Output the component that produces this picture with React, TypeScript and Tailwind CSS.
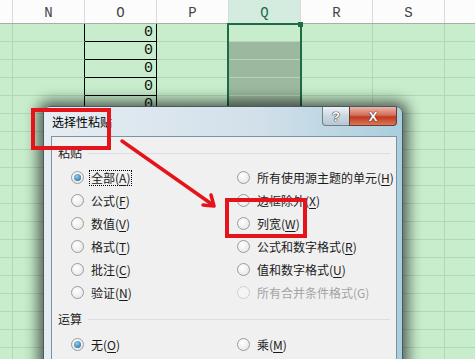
import React from "react";

const colW = ["w-[13px]", "w-[72px]", "w-[72px]", "w-[72px]", "w-[72px]", "w-[72px]", "w-[72px]", "w-[40px]"];
const heads = ["", "N", "O", "P", "Q", "R", "S", ""];
const rows = Array.from({ length: 20 }, (_, i) => i);

function Radio({ checked = false, disabled = false }: { checked?: boolean; disabled?: boolean }) {
  return (
    <span
      className={
        "relative flex h-[13px] w-[13px] shrink-0 items-center justify-center rounded-full border " +
        (disabled
          ? "border-[#cfcfcf] bg-[#f4f4f4]"
          : "border-[#9a9b9b] bg-[radial-gradient(circle_at_40%_35%,#ffffff,#e2e2e2)]")
      }
    >
      {checked && (
        <span className="h-[7px] w-[7px] rounded-full bg-[radial-gradient(circle_at_40%_35%,#8fd0f2,#1c5f8e)]" />
      )}
    </span>
  );
}

function Opt({
  label,
  k,
  checked,
  disabled,
  focus,
}: {
  label: string;
  k: string;
  checked?: boolean;
  disabled?: boolean;
  focus?: boolean;
}) {
  return (
    <div className="flex h-[23px] items-center gap-[5px]">
      <Radio checked={checked} disabled={disabled} />
      <span
        className={
          "px-[1px] leading-[14px] " +
          (focus ? "border border-dotted border-black " : "border border-transparent ") +
          (disabled ? "text-[#a3a3a3]" : "text-[#1a1a1a]")
        }
      >
        {label}(<span className={disabled ? "" : "underline underline-offset-2"}>{k}</span>)
      </span>
    </div>
  );
}

export default function App() {
  return (
    <div className="relative h-[359px] w-[475px] overflow-hidden bg-[#c7edcc] [font-family:'Noto_Sans_CJK_SC','Noto_Sans',sans-serif]">
      {/* header */}
      <div className="flex h-[24px] border-b border-[#a6aea8] bg-[#fbfcfb]">
        {heads.map((h, i) => (
          <div
            key={i}
            className={
              colW[i] +
              " flex shrink-0 items-center justify-center border-r border-[#d8dcd9] pt-[3px] text-[14px] [font-family:'Liberation_Mono',monospace] " +
              (i === 4 ? "bg-[#d3ecdf] text-[#1f6b45]" : "text-[#444]")
            }
          >
            {h}
          </div>
        ))}
      </div>
      {/* rows */}
      {rows.map((r) => (
        <div key={r} className="flex h-[18px]">
          {colW.map((w, i) => (
            <div
              key={i}
              className={
                w +
                " flex shrink-0 items-center justify-end border-b border-r pr-[3px] text-[15px] leading-none text-[#111] [font-family:'Liberation_Mono',monospace] " +
                (i === 1
                  ? "border-b-[#b2d6b7] border-r-black"
                  : i === 2
                  ? "border-black"
                  : "border-[#b2d6b7]") +
                (i === 4 && r >= 1 ? " bg-[#9cb89f]" : "")
              }
            >
              {i === 2 && r < 8 ? "0" : ""}
            </div>
          ))}
        </div>
      ))}

      {/* selection */}
      <div className="absolute left-[227px] top-[23px] h-[400px] w-[75px] border-2 border-[#1f6b45]" />
      <div className="absolute left-[298px] top-[22px] h-[5px] w-[5px] bg-[#1f6b45]" />

      {/* dialog */}
      <div className="absolute left-[43px] top-[106px] h-[270px] w-[360px] rounded-t-[7px] border border-[#4a5866] bg-[linear-gradient(to_right,#e6edf2,#d2e0ea_60%,#a9cedd)] shadow-[0_0_14px_5px_rgba(0,0,0,0.6)]">
        <div className="flex h-[29px] items-start justify-between pl-[8px] pr-[5px]">
          <div className="pt-[7px] text-[12px] leading-[16px] text-black">选择性粘贴</div>
          <div className="flex">
            <div className="flex h-[19px] w-[27px] items-center justify-center rounded-bl-[4px] border border-r-0 border-t-0 border-[#6d7f8d] bg-[linear-gradient(to_bottom,#eef3f6,#cbd8e1_50%,#b7c8d3)] text-[13px] font-bold leading-none text-white [text-shadow:0_0_1px_#333,0_0_1px_#333,0_0_1px_#333] [font-family:'Liberation_Sans',sans-serif]">
              ?
            </div>
            <div className="flex h-[19px] w-[48px] items-center justify-center rounded-br-[4px] border border-t-0 border-[#6b3a33] bg-[linear-gradient(to_bottom,#eab5a8,#d2705c_45%,#c0381f_55%,#d9775a)] text-[13px] font-bold leading-none text-white [text-shadow:0_0_1px_#402020,0_0_1px_#402020] [font-family:'Liberation_Sans',sans-serif]">
              X
            </div>
          </div>
        </div>
        <div className="ml-[7px] mr-[5px] h-[240px] border border-[#7f909e] bg-[#f0f0f0] pl-[6px] pt-[8px] text-[12px]">
          <div className="flex h-[16px] items-center gap-[6px] pr-[6px]">
            <span className="leading-[16px] text-[#1a1a1a]">粘贴</span>
            <div className="h-px flex-1 bg-[#d5dfe5]" />
          </div>
          <div className="mt-[5px] grid grid-cols-[166px_1fr] pl-[13px]">
            <div>
              <Opt label="全部" k="A" checked focus />
              <Opt label="公式" k="F" />
              <Opt label="数值" k="V" />
              <Opt label="格式" k="T" />
              <Opt label="批注" k="C" />
              <Opt label="验证" k="N" />
            </div>
            <div>
              <Opt label="所有使用源主题的单元" k="H" />
              <Opt label="边框除外" k="X" />
              <Opt label="列宽" k="W" />
              <Opt label="公式和数字格式" k="R" />
              <Opt label="值和数字格式" k="U" />
              <Opt label="所有合并条件格式" k="G" disabled />
            </div>
          </div>
          <div className="mt-[7px] flex h-[16px] items-center gap-[6px] pr-[6px]">
            <span className="leading-[16px] text-[#1a1a1a]">运算</span>
            <div className="h-px flex-1 bg-[#d5dfe5]" />
          </div>
          <div className="mt-[6px] grid grid-cols-[166px_1fr] pl-[13px]">
            <Opt label="无" k="O" checked />
            <Opt label="乘" k="M" />
          </div>
        </div>
      </div>

      {/* annotations */}
      <div className="absolute left-[31px] top-[108px] h-[42px] w-[80px] border-4 border-[#e5141b]" />
      <div className="absolute left-[225px] top-[198px] h-[40px] w-[82px] border-4 border-[#e5141b]" />
      <svg className="absolute left-0 top-0" width="475" height="359" viewBox="0 0 475 359">
        <line x1="122" y1="141" x2="213" y2="205" stroke="#e5141b" strokeWidth="3.5" strokeLinecap="round" />
        <polyline points="203,205 214,206 211,195" fill="none" stroke="#e5141b" strokeWidth="3.5" strokeLinecap="round" strokeLinejoin="round" />
      </svg>
    </div>
  );
}
